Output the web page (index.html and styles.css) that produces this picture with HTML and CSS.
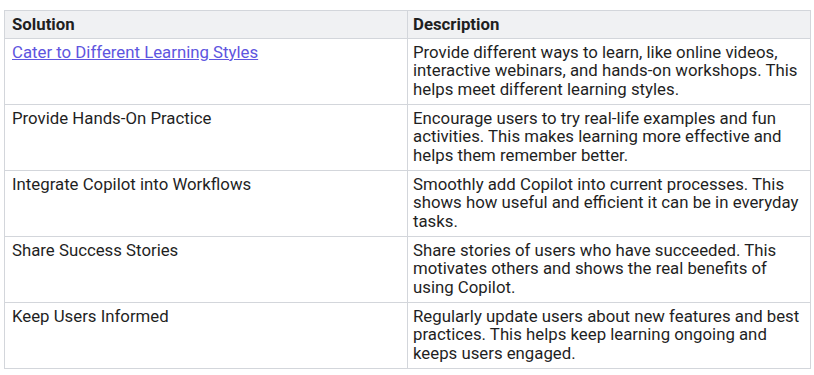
FILE: index.html
```html
<!DOCTYPE html>
<html>
<head>
<meta charset="utf-8">
<link rel="stylesheet" href="styles.css">
</head>
<body>
<table class="grid">
  <thead>
    <tr><th class="col-a">Solution</th><th>Description</th></tr>
  </thead>
  <tbody>
    <tr><td><a class="link" href="#">Cater to Different Learning Styles</a></td><td>Provide different ways to learn, like online videos, interactive webinars, and hands-on workshops. This helps meet different learning styles.</td></tr>
    <tr><td>Provide Hands-On Practice</td><td>Encourage users to try real-life examples and fun activities. This makes learning more effective and helps them remember better.</td></tr>
    <tr><td>Integrate Copilot into Workflows</td><td>Smoothly add Copilot into current processes. This shows how useful and efficient it can be in everyday tasks.</td></tr>
    <tr><td>Share Success Stories</td><td>Share stories of users who have succeeded. This motivates others and shows the real benefits of using Copilot.</td></tr>
    <tr><td>Keep Users Informed</td><td>Regularly update users about new features and best practices. This helps keep learning ongoing and keeps users engaged.</td></tr>
  </tbody>
</table>
</body>
</html>
```
FILE: styles.css
```css
html, body { margin: 0; padding: 0; background: #fff; }
body { padding: 10px 4px 0 4px; font-family: Roboto, "Liberation Sans", sans-serif; color: #1f1f1f; }
.grid {
  border-collapse: collapse;
  width: 807px;
  table-layout: fixed;
  font-size: 16.8px;
  line-height: 18.7px;
}
.grid th, .grid td {
  border: 1px solid #d3d6db;
  vertical-align: top;
  text-align: left;
  padding: 4px 7px 4px 7px;
}
.grid td { height: 57px; }
.grid th {
  background: #f0f1f3;
  font-weight: 700;
  height: 18px;
  padding-top: 4px;
  padding-bottom: 4px;
}
.col-a { width: 388px; }
.grid td:nth-child(2), .grid th:nth-child(2) { padding-left: 5px; padding-right: 5px; }
.link { color: #5e55e0; text-decoration: underline; }
```
